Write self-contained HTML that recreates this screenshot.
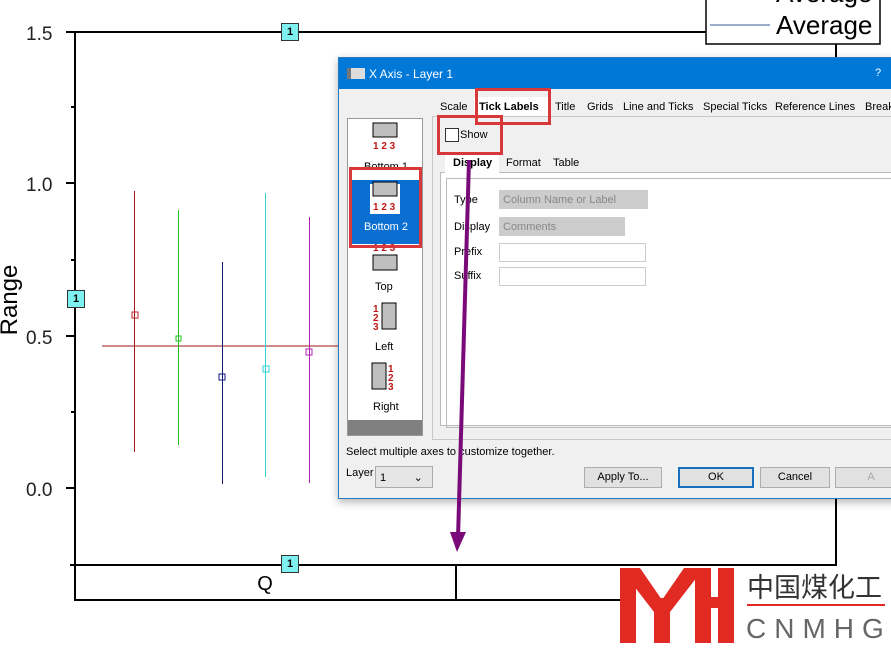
<!DOCTYPE html>
<html><head><meta charset="utf-8"><style>
body{margin:0;width:891px;height:650px;overflow:hidden;background:#fff;position:relative;font-family:"Liberation Sans",sans-serif}
.a{position:absolute}
.t{font-family:"Liberation Sans",sans-serif;font-size:11px;color:#000;position:absolute;white-space:nowrap}
.lab{position:absolute;background:#7ff0f0;border:1px solid #333;width:16px;height:16px;font-size:11px;text-align:center;line-height:16px;font-weight:bold}
.btn{position:absolute;background:#e1e1e1;border:1px solid #adadad;height:19px;font-size:11px;text-align:center;line-height:19px}
.red{position:absolute;border:3px solid #d9383a;box-sizing:border-box}
</style></head><body>
<svg class="a" style="left:0;top:0" width="891" height="650">
<g stroke="#000" stroke-width="2" fill="none">
<line x1="75" y1="31" x2="75" y2="601"/>
<line x1="66" y1="32" x2="706" y2="32"/>
<line x1="66" y1="183" x2="75" y2="183"/><line x1="66" y1="336" x2="75" y2="336"/><line x1="66" y1="488" x2="75" y2="488"/>
<line x1="71" y1="107" x2="75" y2="107"/><line x1="71" y1="260" x2="75" y2="260"/><line x1="71" y1="412" x2="75" y2="412"/>
<line x1="70" y1="565" x2="837" y2="565"/>
<line x1="75" y1="600" x2="620" y2="600"/>
<line x1="456" y1="565" x2="456" y2="600"/>
<line x1="836" y1="44" x2="836" y2="565"/>
</g>
<rect x="706" y="-10" width="174" height="54" fill="#fff" stroke="#000" stroke-width="1.5"/>
<line x1="710" y1="25" x2="770" y2="25" stroke="#3a5a9a" stroke-width="1"/>
<text x="776" y="34" font-size="26" font-family="Liberation Sans">Average</text>
<text x="776" y="2" font-size="26" font-family="Liberation Sans">Average</text>
<text x="26" y="40" font-size="19" font-family="Liberation Sans" fill="#222">1.5</text>
<text x="26" y="191" font-size="19" font-family="Liberation Sans" fill="#222">1.0</text>
<text x="26" y="344" font-size="19" font-family="Liberation Sans" fill="#222">0.5</text>
<text x="26" y="496" font-size="19" font-family="Liberation Sans" fill="#222">0.0</text>
<text x="17" y="300" font-size="24" font-family="Liberation Sans" transform="rotate(-90 17 300)" text-anchor="middle">Range</text>
<text x="265" y="590" font-size="20" font-family="Liberation Sans" text-anchor="middle">Q</text>
<line x1="102" y1="346" x2="340" y2="346" stroke="#a01818"/>
<g fill="none" stroke-width="1">
<line x1="134.5" y1="191" x2="134.5" y2="452" stroke="#a01818"/><rect x="132" y="312" width="6" height="6" stroke="#c02020"/>
<line x1="178.5" y1="210" x2="178.5" y2="445" stroke="#20c020"/><rect x="176" y="336" width="5" height="5" stroke="#20c020"/>
<line x1="222.5" y1="262" x2="222.5" y2="484" stroke="#101870"/><rect x="219" y="374" width="6" height="6" stroke="#101880"/>
<line x1="265.5" y1="193" x2="265.5" y2="477" stroke="#30d0d0"/><rect x="263" y="366" width="6" height="6" stroke="#30d0d0"/>
<line x1="309.5" y1="217" x2="309.5" y2="483" stroke="#b020b0"/><rect x="306" y="349" width="6" height="6" stroke="#b020b0"/>
</g>
</svg>
<div class="lab" style="left:281px;top:23px">1</div>
<div class="lab" style="left:67px;top:290px">1</div>
<div class="lab" style="left:281px;top:555px">1</div>

<div class="a" style="left:338px;top:57px;width:560px;height:440px;background:#f0f0f0;border:1px solid #2a7ac0;box-shadow:0 3px 8px rgba(0,0,0,.3)">
<div class="a" style="left:0;top:0;right:0;height:31px;background:#0078d7"></div>
<div class="a" style="left:8px;top:10px;width:14px;height:11px;background:#ddd;border-left:4px solid #777"></div>
<div class="t" style="left:30px;top:9px;color:#fff;font-size:12px">X Axis - Layer 1</div>
<div class="t" style="left:536px;top:9px;color:#fff">?</div>
</div>
<div class="a" style="left:347px;top:118px;width:74px;height:316px;background:#fff;border:1px solid #999"></div>
<div class="a" style="left:348px;top:420px;width:74px;height:15px;background:#808080"></div>
<div class="a" style="left:349px;top:180px;width:71px;height:64px;background:#0a6fd0"></div>
<div class="a" style="left:370px;top:184px;width:30px;height:30px;background:#fff"></div>
<svg class="a" style="left:347px;top:118px" width="75" height="300">
<g fill="#bfbfbf" stroke="#000"><rect x="26" y="5" width="24" height="14"/><rect x="26" y="64" width="24" height="14"/><rect x="26" y="137" width="24" height="15"/><rect x="35" y="185" width="14" height="26"/><rect x="25" y="245" width="14" height="26"/></g>
<g fill="#c01818" font-size="10" font-weight="bold" font-family="Liberation Sans">
<text x="26" y="31">1 2 3</text><text x="26" y="92">1 2 3</text><text x="26" y="133">1 2 3</text>
<text x="26" y="194">1</text><text x="26" y="203">2</text><text x="26" y="212">3</text>
<text x="41" y="254">1</text><text x="41" y="263">2</text><text x="41" y="272">3</text></g>
</svg>
<div class="t" style="left:364px;top:161px">Bottom 1</div>
<div class="t" style="left:364px;top:221px;color:#fff">Bottom 2</div>
<div class="t" style="left:375px;top:281px">Top</div>
<div class="t" style="left:375px;top:341px">Left</div>
<div class="t" style="left:373px;top:401px">Right</div>
<div class="t" style="left:440px;top:101px">Scale</div>
<div class="a" style="left:474px;top:97px;width:74px;height:20px;background:#fff"></div>
<div class="t" style="left:479px;top:101px;font-weight:bold">Tick Labels</div>
<div class="t" style="left:555px;top:101px">Title</div>
<div class="t" style="left:587px;top:101px">Grids</div>
<div class="t" style="left:623px;top:101px">Line and Ticks</div>
<div class="t" style="left:703px;top:101px">Special Ticks</div>
<div class="t" style="left:775px;top:101px">Reference Lines</div>
<div class="t" style="left:865px;top:101px">Break</div>
<div class="a" style="left:432px;top:116px;width:470px;height:322px;border:1px solid #c8c8c8;background:#f0f0f0"></div>
<div class="a" style="left:445px;top:128px;width:12px;height:12px;background:#fff;border:1px solid #333"></div>
<div class="t" style="left:460px;top:129px">Show</div>
<div class="a" style="left:440px;top:172px;width:460px;height:252px;background:#fff;border:1px solid #bbb"></div>
<div class="a" style="left:446px;top:178px;width:460px;height:248px;border:1px solid #bbb;border-right:none"></div>
<div class="a" style="left:445px;top:153px;width:54px;height:20px;background:#fff"></div>
<div class="t" style="left:453px;top:157px;font-weight:bold">Display</div>
<div class="t" style="left:506px;top:157px">Format</div>
<div class="t" style="left:553px;top:157px">Table</div>
<div class="t" style="left:454px;top:194px">Type</div>
<div class="a" style="left:499px;top:190px;width:149px;height:19px;background:#ccc"></div>
<div class="t" style="left:503px;top:194px;color:#888">Column Name or Label</div>
<div class="t" style="left:454px;top:221px">Display</div>
<div class="a" style="left:499px;top:217px;width:126px;height:19px;background:#ccc"></div>
<div class="t" style="left:503px;top:221px;color:#888">Comments</div>
<div class="t" style="left:454px;top:246px">Prefix</div>
<div class="a" style="left:499px;top:243px;width:145px;height:17px;background:#fff;border:1px solid #ccc"></div>
<div class="t" style="left:454px;top:270px">Suffix</div>
<div class="a" style="left:499px;top:267px;width:145px;height:17px;background:#fff;border:1px solid #ccc"></div>
<div class="t" style="left:346px;top:446px">Select multiple axes to customize together.</div>
<div class="t" style="left:346px;top:467px">Layer</div>
<div class="a" style="left:375px;top:466px;width:56px;height:20px;background:#e6e6e6;border:1px solid #aaa"></div>
<div class="t" style="left:380px;top:471px">1 &nbsp;&nbsp;&nbsp;&nbsp;&nbsp;&nbsp;&nbsp;&nbsp;&#8964;</div>
<div class="btn" style="left:584px;top:467px;width:76px">Apply To...</div>
<div class="btn" style="left:678px;top:467px;width:72px;border:2px solid #1a6fc0;height:17px;line-height:17px">OK</div>
<div class="btn" style="left:760px;top:467px;width:68px">Cancel</div>
<div class="btn" style="left:835px;top:467px;width:70px;color:#aaa">A</div>
<div class="red" style="left:349px;top:167px;width:73px;height:81px"></div>
<div class="red" style="left:475px;top:88px;width:76px;height:37px"></div>
<div class="red" style="left:437px;top:115px;width:66px;height:40px"></div>
<svg class="a" style="left:0;top:0" width="891" height="650">
<line x1="469" y1="160" x2="458" y2="538" stroke="#7a0a7a" stroke-width="4"/>
<polygon points="450,532 466,532 457,552" fill="#7a0a7a"/>
<g fill="#e02a22">
<rect x="620" y="568" width="16" height="75"/>
<polygon points="620,568 640,568 662,600 684,568 704,568 670,612 654,612"/>
<rect x="654" y="598" width="16" height="45"/>
<rect x="695" y="568" width="16" height="75"/>
<rect x="718" y="568" width="16" height="75"/>
<rect x="695" y="597" width="39" height="11"/>
<rect x="747" y="604" width="138" height="2"/>
</g>
<text x="747" y="597" font-size="27" fill="#333" font-family="Noto Sans CJK SC,sans-serif">中国煤化工</text>
<text x="746" y="638" font-size="28" fill="#666" font-family="Liberation Sans" letter-spacing="8">CNMHG</text>
</svg>
</body></html>
